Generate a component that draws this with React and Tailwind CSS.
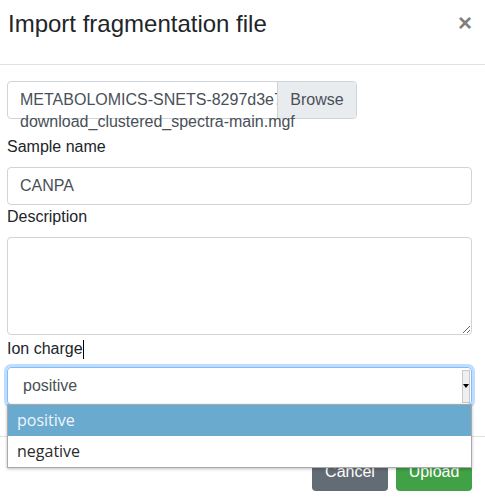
import React from "react";

export default function App() {
  const sans = { fontFamily: '"Liberation Sans", Arial, sans-serif' };
  return (
    <div className="w-[485px] h-[502px] bg-white overflow-hidden text-[16px] text-[#212529]" style={sans}>
      {/* Header */}
      <div className="h-[65px] border-b border-[#dee2e6] flex items-start justify-between pl-[8px] pr-[13px]">
        <h4 className="pt-[10px] text-[24px] leading-[1.2] font-normal text-[#212529]">Import fragmentation file</h4>
        <button className="pt-[11px] text-[24px] leading-none font-bold text-[#808080]">×</button>
      </div>

      {/* Body */}
      <div className="pl-[7px] pr-[13px] pt-[16px] pb-[31px]">
        <div className="w-[350px] h-[38px] border border-[#ced4da] rounded-[4px] flex items-stretch overflow-hidden">
          <div className="flex-1 min-w-0 overflow-hidden whitespace-nowrap pl-[12px] leading-[36px] text-[#495057]">
            METABOLOMICS-SNETS-8297d3e7
          </div>
          <div className="w-[79px] shrink-0 bg-[#e9ecef] border-l border-[#ced4da] flex items-center justify-center text-[#495057]">
            Browse
          </div>
        </div>
        <div className="mt-[-9px] leading-6 pl-[13px] text-[#495057]">download_clustered_spectra-main.mgf</div>

        <div className="mt-[1px] leading-6">Sample name</div>
        <div className="mt-2 h-[38px] border border-[#ced4da] rounded-[4px] pl-[12px] leading-[36px] text-[#495057]">CANPA</div>

        <div className="leading-6">Description</div>
        <textarea
          defaultValue=""
          className="mt-2 block w-full h-[98px] border border-[#ced4da] rounded-[4px] resize-y outline-none"
        />

        <div className="mt-[2px] leading-6 flex items-center">
          <span>Ion charge</span>
          <span className="inline-block w-px h-[19px] bg-black" />
        </div>

        <div className="relative mt-[6px]">
          <div className="h-[38px] border border-[#80bdff] rounded-[4px] shadow-[0_0_0_3px_rgba(0,123,255,0.25)] flex items-center justify-between pl-[15px] pr-[1px] text-[#495057]">
            <span>positive</span>
            <div className="w-[8px] h-[33px] bg-[#efefef] border border-[#c8c8c8] flex items-center justify-center">
              <svg width="6" height="4" viewBox="0 0 6 4"><path d="M0 0h6L3 4z" fill="#000" /></svg>
            </div>
          </div>
          <div
            className="absolute left-0 top-[37px] w-[465px] h-[64px] bg-white border border-[#a9a9a9] shadow-[0_1px_3px_rgba(0,0,0,0.25)] z-10 text-[16px]"
            style={{ fontFamily: '"Open Sans", "Noto Sans", sans-serif' }}
          >
            <div className="h-[31px] bg-[#6aaacf] text-[#eef6fb] pl-[9px] leading-[31px]">positive</div>
            <div className="h-[31px] text-[#2b2b2b] pl-[9px] leading-[31px]">negative</div>
          </div>
        </div>
      </div>

      {/* Footer */}
      <div className="border-t border-[#dee2e6] pt-[16px] pr-[13px] flex justify-end gap-[8px]">
        <button className="w-[76px] h-[38px] rounded-[4px] bg-[#636b74] text-white">Cancel</button>
        <button className="w-[76px] h-[38px] rounded-[4px] bg-[#41a146] text-white">Upload</button>
      </div>
    </div>
  );
}
